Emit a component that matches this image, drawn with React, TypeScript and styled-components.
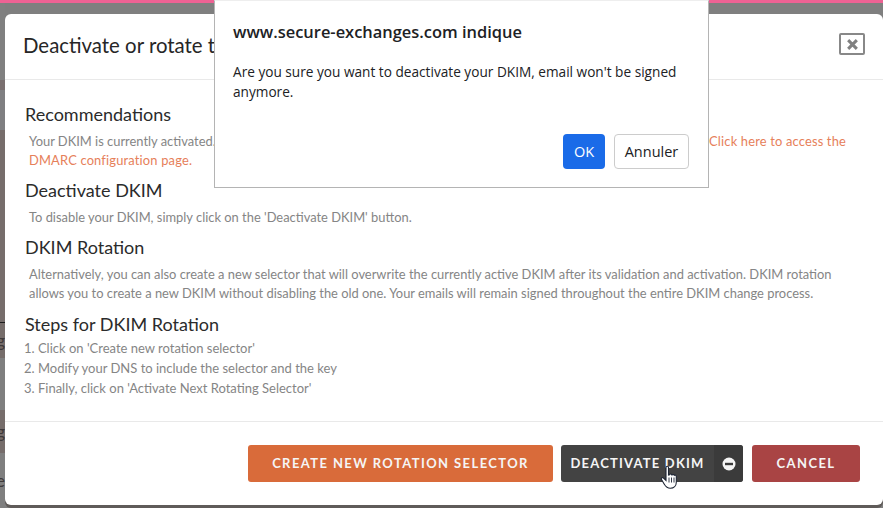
import React from "react";
import styled, { createGlobalStyle } from "styled-components";

const Global = createGlobalStyle`
  html, body { margin: 0; padding: 0; width: 883px; height: 508px; overflow: hidden; background: #7f7f7f; }
  * { box-sizing: border-box; }
`;
const Page = styled.div`
  position: relative; width: 883px; height: 508px; overflow: hidden; background: #7f7f7f;
  font-family: Lato, "Liberation Sans", sans-serif;
`;
const PinkBar = styled.div`height: 3px; background: #ee6294;`;
const Stage = styled.div`display: flex; height: 505px; padding-top: 0;`;
const Backdrop = styled.div`width: 5px; display: flex; flex-direction: column; overflow: hidden; flex: none;`;
const Band = styled.div<{ $h: number; $c: string; $line?: boolean }>`
  height: ${p => p.$h}px; flex: none; background: ${p => p.$c};
  border-top: ${p => (p.$line ? "1px solid #1d1d1d" : "0")};
  overflow: hidden; display: flex; align-items: center; justify-content: flex-end;
  font-size: 17px; color: #3f3a3a;
`;
const Modal = styled.section`
  margin-top: 11px; flex: 1; height: 491px; background: #fff; border-radius: 6px;
  display: flex; flex-direction: column; box-shadow: 0 3px 0 #5f5b59;
`;
const Header = styled.header`
  height: 66px; flex: none; padding: 0 18px 4px; display: flex; align-items: center; justify-content: space-between;
  border-bottom: 1px solid #e9e9e9;
`;
const Title = styled.h2`
  margin: 0; width: 191px; overflow: hidden; white-space: nowrap;
  font-size: 20.4px; font-weight: 400; color: #262626;
`;
const CloseBox = styled.button`
  width: 26px; height: 22px; margin-top: -1px; padding: 0; border: 2px solid #888; border-radius: 2px; background: #fff;
  color: #808080; display: flex; align-items: center; justify-content: center;
`;
const Body = styled.div`flex: 1; padding: 22px 20px 0 20px;`;
const Heading = styled.h3`margin: 0; font-size: 18px; line-height: 24px; font-weight: 400; color: #2b2b2b;`;
const StepsHeading = styled(Heading)`margin-top: 9.5px;`;
const Text = styled.p`margin: 5.5px 0 8.5px 4px; font-size: 12.9px; line-height: 19px; color: #858585; font-weight: 400;`;
const SplitLine = styled.span`display: flex; justify-content: space-between; width: 817px;`;
const Orange = styled.span`color: #e6805a; letter-spacing: 0.17px;`;
const Steps = styled.ol`margin: 2px 0 0 -1px; padding: 0; list-style: none; font-size: 13px; line-height: 20px; color: #858585;`;
const Footer = styled.footer`
  height: 84px; flex: none; border-top: 1px solid #e9e9e9; display: flex; justify-content: flex-end; align-items: flex-start;
  padding: 23px 23px 0 0; gap: 9px;
`;
const Btn = styled.button<{ $bg: string; $w: number }>`
  width: ${p => p.$w}px; height: 37px; border: 0; border-radius: 3px; background: ${p => p.$bg}; color: #f5f5f5;
  font: 700 13px Lato, "Liberation Sans", sans-serif; letter-spacing: 1.4px; padding: 0 0 1px;
  display: flex; align-items: center; justify-content: center;
`;
const OrangeBtn = styled(Btn)`margin-right: -1px;`;
const DarkBtn = styled(Btn)`padding: 0; letter-spacing: 1.2px;`;
const DarkLabel = styled.span`flex: 1; text-align: center; white-space: nowrap; padding-bottom: 1px;`;
const IconPart = styled.span`
  width: 29px; height: 37px; flex: none; background: #3b3b3b; border-radius: 0 3px 3px 0;
  display: flex; align-items: center; justify-content: center;
`;
const Cursor = styled.svg`position: absolute; left: 660px; top: 465px; width: 20px; height: 26px;`;
const Dialog = styled.div`
  position: absolute; left: 214px; top: 0; width: 495px; height: 188px; background: #fff;
  border: 1px solid #b4b4b4; border-top-color: #eee; font-family: "Open Sans", "Noto Sans", sans-serif;
  padding: 20px 18px 0; display: flex; flex-direction: column;
`;
const DialogTitle = styled.div`font-size: 16.45px; line-height: 22px; font-weight: 600; color: #202124;`;
const DialogText = styled.div`margin-top: 19px; font-size: 13.65px; line-height: 20px; color: #202124; flex: 1;`;
const DialogActions = styled.div`display: flex; justify-content: flex-end; gap: 9px; padding: 0 1px 18px 0;`;
const Ok = styled.button`
  width: 42px; height: 35px; border: 0; border-radius: 4px; background: #1a6be8; color: #fff;
  font: 14.5px "Open Sans", sans-serif;
`;
const Cancel = styled.button`
  width: 75px; height: 35px; border: 1px solid #ccc; border-radius: 4px; background: #fff; color: #202124;
  font: 14.5px "Open Sans", sans-serif; padding: 0;
`;

export default function App() {
  return (
    <Page>
      <Global />
      <PinkBar />
      <Stage>
        <Backdrop>
          <Band $h={77} $c="#808080" />
          <Band $h={10} $c="#7a7070" />
          <Band $h={40} $c="#7f7f81" />
          <Band $h={192} $c="#766d6b" />
          <Band $h={36} $c="#766d6b" $line>g</Band>
          <Band $h={52} $c="#7f7f7f" />
          <Band $h={43} $c="#766d6b">g</Band>
          <Band $h={55} $c="#7f7f7f">e</Band>
        </Backdrop>
        <Modal>
          <Header>
            <Title>Deactivate or rotate the DKIM</Title>
            <CloseBox aria-label="Close">
              <svg width="13" height="13" viewBox="0 0 12 12"><path d="M2 2l8 8M10 2l-8 8" stroke="currentColor" strokeWidth="2.8" /></svg>
            </CloseBox>
          </Header>
          <Body>
            <Heading>Recommendations</Heading>
            <Text>
              <SplitLine>
                <span>Your DKIM is currently activated.</span>
                <Orange>Click here to access the</Orange>
              </SplitLine>
              <Orange>DMARC configuration page.</Orange>
            </Text>
            <Heading>Deactivate DKIM</Heading>
            <Text>To disable your DKIM, simply click on the 'Deactivate DKIM' button.</Text>
            <Heading>DKIM Rotation</Heading>
            <Text>Alternatively, you can also create a new selector that will overwrite the currently active DKIM after its validation and activation. DKIM rotation allows you to create a new DKIM without disabling the old one. Your emails will remain signed throughout the entire DKIM change process.</Text>
            <StepsHeading>Steps for DKIM Rotation</StepsHeading>
            <Steps>
              <li>1. Click on 'Create new rotation selector'</li>
              <li>2. Modify your DNS to include the selector and the key</li>
              <li>3. Finally, click on 'Activate Next Rotating Selector'</li>
            </Steps>
          </Body>
          <Footer>
            <OrangeBtn $bg="#d96b3a" $w={305}>CREATE NEW ROTATION SELECTOR</OrangeBtn>
            <DarkBtn $bg="#434343" $w={182}>
              <DarkLabel>DEACTIVATE DKIM</DarkLabel>
              <IconPart>
                <svg width="14" height="14" viewBox="0 0 14 14"><circle cx="7" cy="7" r="6.5" fill="#f5f5f5" /><rect x="3" y="5.8" width="8" height="2.4" fill="#3b3b3b" /></svg>
              </IconPart>
            </DarkBtn>
            <Btn $bg="#a94444" $w={108}>CANCEL</Btn>
          </Footer>
        </Modal>
      </Stage>
      <Dialog>
        <DialogTitle>www.secure-exchanges.com indique</DialogTitle>
        <DialogText>Are you sure you want to deactivate your DKIM, email won't be signed anymore.</DialogText>
        <DialogActions>
          <Ok>OK</Ok>
          <Cancel>Annuler</Cancel>
        </DialogActions>
      </Dialog>
      <Cursor viewBox="0 0 20 26">
        <path d="M6 2.500c0-1.600 2.500-1.600 2.500 0V10l1-.3c.3-1 2-1 2.400 0l.1.3c.5-.8 2-.7 2.300.3.600-.5 2-.2 2 1v6c0 3.500-2.500 6-6 6-3 0-4.500-1.500-6-4L1.500 14.500c-.8-1.300.8-2.500 2-1.500L6 15.500z" fill="#fff" stroke="#1d2433" strokeWidth="1.1" />
        <path d="M9 12.500v5M11.500 12.500v5M14 12.500v5" stroke="#1d2433" strokeWidth="0.9" />
      </Cursor>
    </Page>
  );
}
